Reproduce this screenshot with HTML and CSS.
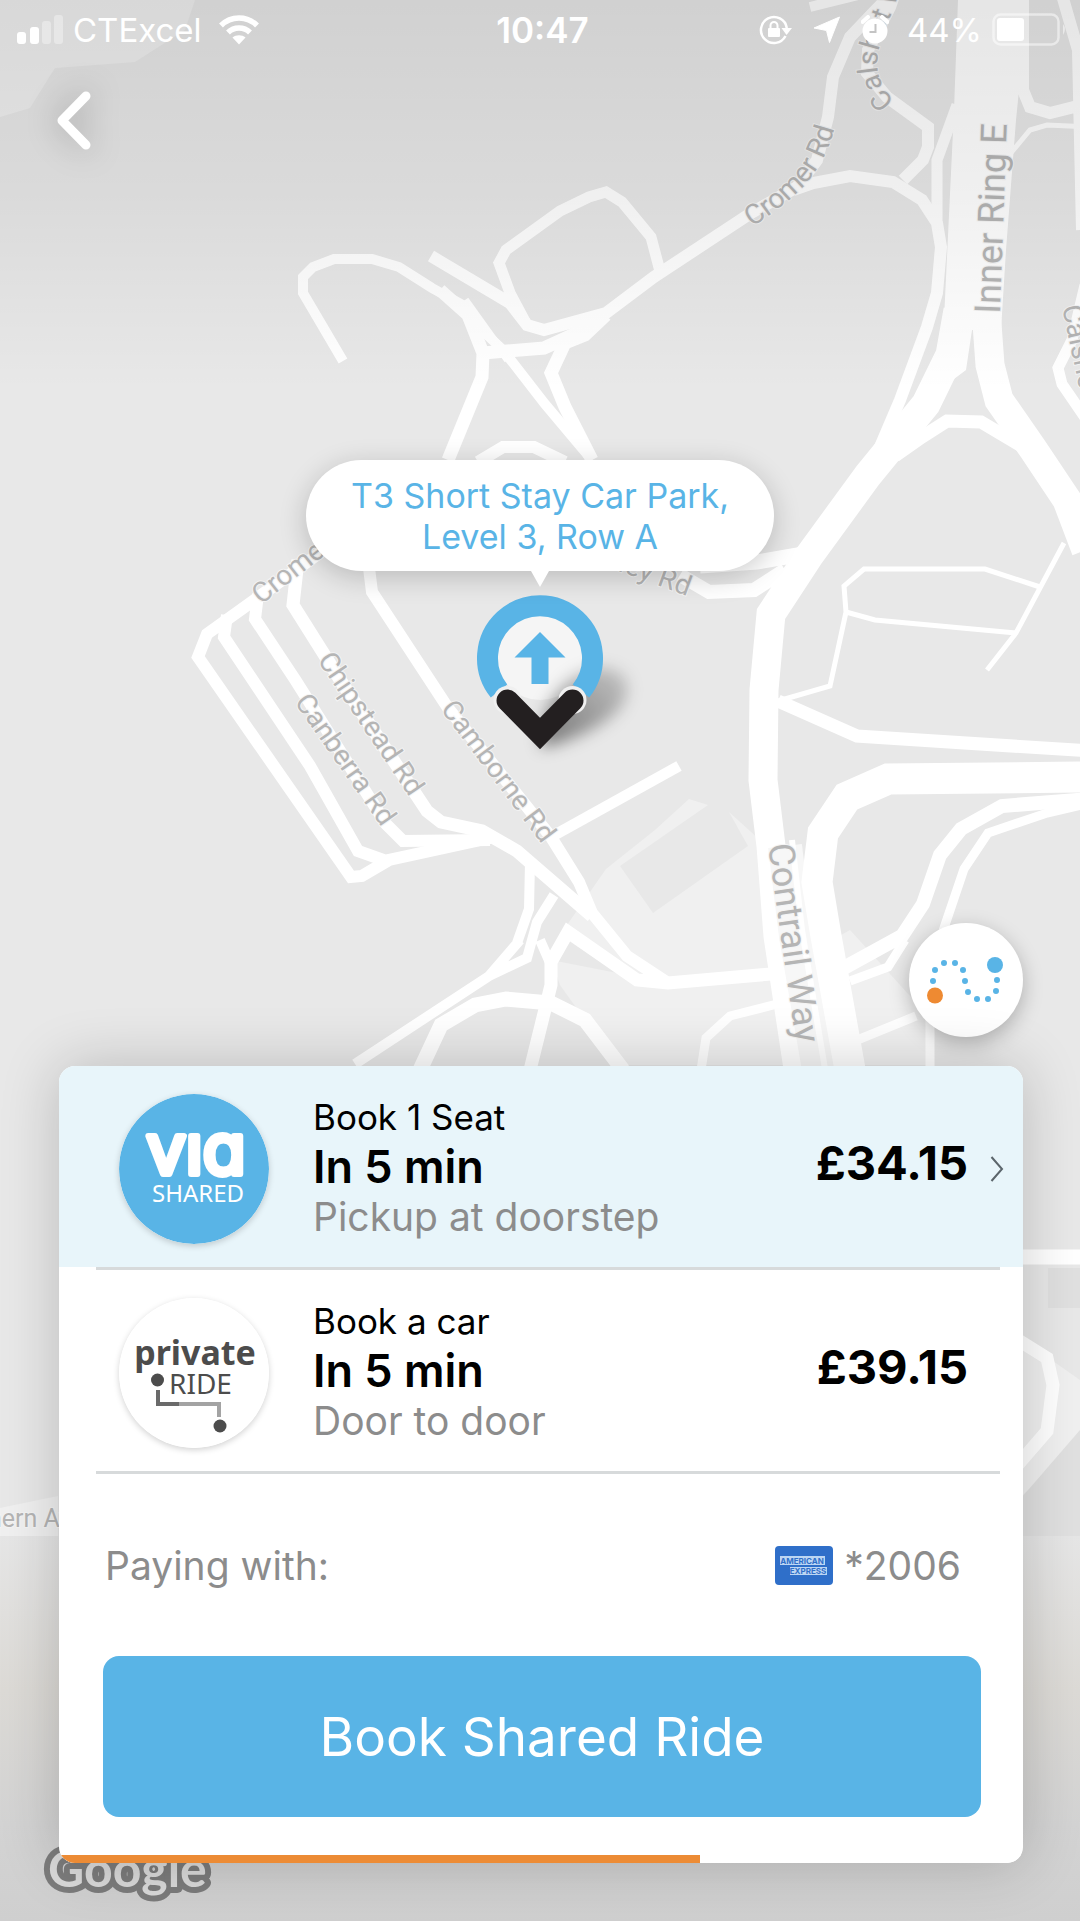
FILE: index.html
```html
<!DOCTYPE html>
<html lang="en">

<head>
    <meta charset="UTF-8">
    <meta name="viewport" content="width=device-width, initial-scale=1.0">
    <title>Book a Ride</title>
    <link rel="stylesheet" href="styles.css">
</head>

<body>
    <div class="screen">

        <svg class="map" viewBox="0 0 1080 1921" preserveAspectRatio="xMidYMid slice" aria-hidden="true">
            <defs>
                <linearGradient id="topShade" x1="0" y1="0" x2="0" y2="1">
                    <stop offset="0" stop-color="#000" stop-opacity="0.1" />
                    <stop offset="0.5" stop-color="#000" stop-opacity="0.06" />
                    <stop offset="1" stop-color="#000" stop-opacity="0" />
                </linearGradient>
                <linearGradient id="bottomShade" x1="0" y1="0" x2="0" y2="1">
                    <stop offset="0" stop-color="#e6e6e6" />
                    <stop offset="0.4" stop-color="#dcdad6" />
                    <stop offset="0.75" stop-color="#d3d3d3" />
                    <stop offset="1" stop-color="#cfcfcf" />
                </linearGradient>
                <path id="cromerPath" d="M752 227 C 802 194 830 168 838 108" />
                <path id="calshotPath" d="M895 101 C 872 80 876 56 882 38 L 904 -20" />
            </defs>

            <!-- Land areas -->
            <path class="land" d="M0 0H195L185 30L135 62L55 68L30 108L0 117Z" />
            <path class="land" d="M560 935L606 869L655 830L689 799L708 805L620 866L653 913L748 846L729 812L771 850V974L668 983L620 975Z" />
            <path class="land" d="M551 960L668 983L771 974L850 930L930 1018V1065H620L585 1020L560 985Z" />
            <path class="land" d="M1023 1340L1080 1380V1440L1023 1495Z" />
            <path class="land" d="M0 1508L58 1496V1536H0Z" />
            <path class="block" d="M1048 1268H1080V1308H1048Z" />
            <path class="block" d="M1023 1496L1080 1430V1536H1023Z" />

            <!-- Main roads -->
            <path class="road-fill" d="M958 0H1028L1016 120L1006 250L1001 330L972 330L966 370L926 400L944 320L954 110Z" />
            <path class="road" stroke-width="29" d="M958 310L950 355L926 404L868 475L809 556L771 614L764 690L763 780L771 846L778 936L799 1075" />
            <path class="road" stroke-width="29" d="M986 310L990 365L999 400L1033 449L1067 500L1086 550" />
            <path class="road-soft" stroke-width="34" d="M785 846L796 936L820 1075" />
            <path class="road" stroke-width="31" d="M1090 777L888 779L847 797L823 833L817 882L826 936L851 1075" />
            <path class="road" stroke-width="6" d="M792 840L802 930L826 1075" />

            <!-- North west -->
            <path class="road" stroke-width="10" d="M343 361L303 293V277L313 267L334 259H372L399 267L432 288L468 308L482 330L503 350L545 404L592 460" />
            <path class="road" stroke-width="12" d="M431 256L510 303L527 325L544 330L606 313L654 277L751 213L797 187L817 160L828 117L833 77L850 37L873 13L895 -10" />
            <path class="road" stroke-width="13" d="M606 315L585 335L565 343L551 373L565 407L592 460" />
            <path class="road" stroke-width="13" d="M440 290L468 315L483 353L482 377L448 460" />
            <path class="road" stroke-width="13" d="M483 353L544 348L590 327" />
            <path class="road" stroke-width="8" d="M465 300L508 360" />
            <path class="road" stroke-width="11" d="M527 325L510 293L499 263L506 250L560 211L589 197L606 192L622 202L651 237L661 275" />
            <path class="road" stroke-width="12" d="M478 462L503 447H534L565 462" />

            <!-- North east -->
            <path class="road" stroke-width="12" d="M793 190L813 183L850 176L893 182L922 200L937 223L941 247L937 293L927 327L900 400L868 475" />
            <path class="road" stroke-width="12" d="M903 180L923 160L928 147V127L887 97L867 73L868 50L890 7L896 -10" />
            <path class="road" stroke-width="11" d="M937 220V160L957 105" />
            <path class="road" stroke-width="12" d="M1023 -5V90L1030 107L1050 113L1090 103M1062 -5L1078 50L1082 230" />
            <path class="road" stroke-width="5" d="M1010 154L1030 130L1047 125L1090 127" />
            <path class="road" stroke-width="11" d="M1085 285L1072 340L1058 368L1062 384L1090 425" />
            <path class="road" stroke-width="10" d="M810 7L858 -5" />
            <path class="road" stroke-width="13" d="M895 456L922 437L947 421L981 422L1023 447" />
            <path class="road" stroke-width="15" d="M815 552L757 562L700 566" />
            <path class="road" stroke-width="14" d="M785 570L754 590L709 592L680 575" />

            <!-- East -->
            <path class="road" stroke-width="13" d="M778 701L857 736L1090 751" />
            <path class="road" stroke-width="5" d="M778 701L830 686L846 612L844 586L864 569H985L1040 587M846 612L875 620L1016 633M1064 543L1016 633L987 670" />
            <path class="road" stroke-width="14" d="M1090 799L1002 806L961 829L940 855L923 904L902 936L840 970" />
            <path class="road" stroke-width="9" d="M1090 803L1047 813L988 833L964 869L943 931M905 940L888 967L850 981" />
            <path class="road" stroke-width="9" d="M850 1043L916 1016M930 1020V1070" />
            <path class="road" stroke-width="15" d="M1020 1257H1090" />
            <path class="road" stroke-width="13" d="M1015 1338L1047 1358L1053 1385L1047 1431L1015 1468" />

            <!-- Car park rows -->
            <path class="road" stroke-width="12" d="M368 560L372 592L448 708L551 837L579 882L592 913L627 956L668 983" />
            <path class="road" stroke-width="11" d="M551 837L679 766" />
            <path class="road" stroke-width="13" d="M298 560L293 605L344 686L427 811L441 822L482 831L517 851L592 916" />
            <path class="road" stroke-width="12" d="M258 594L255 619L296 681L386 824L403 841L490 840" />
            <path class="road" stroke-width="12" d="M227 615L224 637L310 766L358 851L389 862" />
            <path class="road" stroke-width="12" d="M324 550L207 634L198 657L351 877L362 876L389 860L490 838" />

            <!-- South -->
            <path class="road" stroke-width="13" d="M771 974L668 983L637 980L568 932L551 962V985L530 1070" />
            <path class="road" stroke-width="10" d="M530 862L529 909L517 943M554 895L537 922L527 958L489 976L355 1064M520 940L489 976M540 940L551 965" />
            <path class="road" stroke-width="15" d="M420 1070L441 1025L475 1005L506 999L551 1003L585 1020L623 1070" />
            <path class="road" stroke-width="9" d="M701 1070L706 1038L730 1016L785 1002" />

            <!-- Street names -->
            <g class="street">
                <text><textPath href="#cromerPath">Cromer Rd</textPath></text>
                <text><textPath href="#calshotPath">Calshot Wy</textPath></text>
                <text transform="translate(1062 307) rotate(78)">Calshot</text>
                <text transform="translate(261 605) rotate(-38)">Cromer Rd</text>
                <text transform="translate(580 557) rotate(20)">Bailey Rd</text>
                <text transform="translate(317 660) rotate(56)">Chipstead Rd</text>
                <text transform="translate(294 702) rotate(55)">Canberra Rd</text>
                <text transform="translate(440 709) rotate(53)">Camborne Rd</text>
            </g>
            <g class="street street-large">
                <text transform="translate(1000 314) rotate(-88)">Inner Ring E</text>
                <text transform="translate(768 845) rotate(82)">Contrail Way</text>
            </g>

            <rect width="1080" height="390" fill="url(#topShade)" />
            <rect y="1536" width="1080" height="385" fill="url(#bottomShade)" />

            <text class="street street-small" x="-12" y="1527">hern Ave</text>
            <text class="google" x="48" y="1887">Google</text>
        </svg>

        <header class="status-bar">
            <div class="status-left">
                <svg width="47" height="30" viewBox="0 0 47 30" aria-hidden="true">
                    <rect x="0" y="17" width="9" height="12" rx="3" fill="#fff" />
                    <rect x="13" y="12" width="9" height="17" rx="3" fill="#fff" />
                    <rect x="25" y="6" width="9" height="23" rx="3" fill="#fff" opacity="0.35" />
                    <rect x="37" y="0" width="9" height="29" rx="3" fill="#fff" opacity="0.35" />
                </svg>
                <span>CTExcel</span>
                <svg class="wifi" width="40" height="30" viewBox="0 0 40 30" aria-hidden="true">
                    <path d="M2 10.500C12 0.500 28 0.500 38 10.500M9 17.500C15 11.500 25 11.500 31 17.500" fill="none" stroke="#fff" stroke-width="5.500" />
                    <path d="M20 29.500L13.500 22.500C17 19.500 23 19.500 26.500 22.500Z" fill="#fff" />
                </svg>
            </div>
            <time class="clock">10:47</time>
            <div class="status-right">
                <svg width="34" height="30" viewBox="0 0 34 30" aria-hidden="true">
                    <path d="M26.500 21A13 13 0 1 1 27.800 13" fill="none" stroke="#fff" stroke-width="2.500" />
                    <path d="M22.500 13H33L27.500 20Z" fill="#fff" />
                    <rect x="9" y="13" width="12" height="9" rx="1" fill="#fff" />
                    <path d="M11.500 14V10.500A3.500 3.500 0 0 1 18.500 10.500V14" fill="none" stroke="#fff" stroke-width="2" />
                </svg>
                <svg width="28" height="28" viewBox="0 0 28 28" aria-hidden="true">
                    <path d="M26.500 1L16.500 26.500L13.500 14.500L1 12Z" fill="#fff" stroke="#fff" stroke-linejoin="round" />
                </svg>
                <svg width="28" height="30" viewBox="0 0 28 30" aria-hidden="true">
                    <circle cx="14" cy="16" r="12.500" fill="#fff" />
                    <path d="M1.500 7L7 2M26.500 7L21 2" stroke="#fff" stroke-width="4" stroke-linecap="round" />
                    <path d="M14.500 9V17H8.500" fill="none" stroke="#c4c4c4" stroke-width="2" />
                </svg>
                <span>44%</span>
                <svg width="76" height="34" viewBox="0 0 76 34" aria-hidden="true">
                    <rect x="1.500" y="1.500" width="65" height="30" rx="7" fill="none" stroke="#fff" stroke-width="2.500" opacity="0.5" />
                    <path d="M71 11Q75 16 71 22Z" fill="#fff" opacity="0.5" />
                    <rect x="5" y="5" width="27" height="23" rx="3" fill="#fff" />
                </svg>
            </div>
        </header>

        <nav class="top-nav">
            <button type="button" class="back-button" aria-label="Back">
                <svg width="44" height="68" viewBox="0 0 44 68" aria-hidden="true">
                    <path d="M34 10L10 34.500L34 59" fill="none" stroke="#fff" stroke-width="9" stroke-linecap="round" stroke-linejoin="round" />
                </svg>
            </button>
        </nav>

        <main class="map-area">
            <p class="callout">T3 Short Stay Car Park,<br>Level 3, Row A</p>
            <svg class="pin" width="180" height="165" viewBox="0 0 180 165" aria-hidden="true">
                <defs>
                    <filter id="pinBlur" x="-50%" y="-50%" width="200%" height="200%">
                        <feGaussianBlur stdDeviation="8" />
                    </filter>
                    <linearGradient id="pinShadow" x1="0" y1="1" x2="1" y2="0">
                        <stop offset="0" stop-color="#000" stop-opacity="0.5" />
                        <stop offset="1" stop-color="#000" stop-opacity="0.15" />
                    </linearGradient>
                </defs>
                <circle cx="90" cy="67" r="43" fill="#f5f5f5" />
                <path d="M92 158C86 128 108 86 146 78C180 76 184 100 170 118C152 138 122 150 92 158Z" fill="url(#pinShadow)" filter="url(#pinBlur)" />
                <path d="M49 101A52.500 52.500 0 1 1 131 101" fill="none" stroke="#59b4e6" stroke-width="21" />
                <path d="M90 42L115.500 67.500H98.500V94H81.500V67.500H64.500Z" fill="#59b4e6" />
                <circle cx="57.500" cy="110" r="14" fill="#f0f0f0" />
                <circle cx="122.500" cy="110" r="14" fill="#f0f0f0" />
                <path d="M57.500 110.500L90 143.500L122.500 110.500" fill="none" stroke="#231f20" stroke-width="22" stroke-linecap="round" />
            </svg>
            <button type="button" class="route-button" aria-label="Show route">
                <svg width="78" height="48" viewBox="0 0 78 48" aria-hidden="true">
                    <path d="M6 25h0M8 14h0M17 7h0M28 7h0M36 14h0M38 25h0M41 36h0M50 43h0M61 43h0M69 35h0M70 24h0" fill="none" stroke="#59b4e6" stroke-width="6" stroke-linecap="round" />
                    <circle cx="8" cy="39.500" r="8" fill="#ee8a32" />
                    <circle cx="68" cy="9" r="8" fill="#59b4e6" />
                </svg>
            </button>
        </main>

        <section class="booking-card">
            <button type="button" class="ride ride-selected">
                <svg class="ride-logo" width="150" height="150" viewBox="0 0 150 150" aria-hidden="true">
                    <circle cx="75" cy="75" r="75" fill="#59b4e6" />
                    <text class="via-name" x="77" y="80" text-anchor="middle">vıa</text>
                    <text class="via-type" x="79" y="108" text-anchor="middle">SHARED</text>
                </svg>
                <span class="ride-info">
                    <span class="ride-title">Book 1 Seat</span>
                    <span class="ride-time">In 5 min</span>
                    <span class="ride-note">Pickup at doorstep</span>
                </span>
                <span class="ride-price">£34.15</span>
                <svg class="chevron" width="14" height="28" viewBox="0 0 14 28" aria-hidden="true">
                    <path d="M1.500 2L12 14L1.500 26" fill="none" stroke="#5c666c" stroke-width="2" />
                </svg>
            </button>
            <hr class="divider">
            <button type="button" class="ride">
                <svg class="ride-logo" width="150" height="150" viewBox="0 0 150 150" aria-hidden="true">
                    <circle cx="75" cy="75" r="75" fill="#fff" />
                    <text class="private-name" x="76" y="67" text-anchor="middle">private</text>
                    <text class="private-type" x="50" y="96">RIDE</text>
                    <path d="M60 106H100V119" fill="none" stroke="#a3a3a3" stroke-width="4" />
                    <path d="M39 92V106H60" fill="none" stroke="#6a6a6a" stroke-width="4" />
                    <circle cx="38.500" cy="82" r="6.500" fill="#4c4c4c" />
                    <circle cx="101" cy="128" r="6.500" fill="#4c4c4c" />
                </svg>
                <span class="ride-info">
                    <span class="ride-title">Book a car</span>
                    <span class="ride-time">In 5 min</span>
                    <span class="ride-note">Door to door</span>
                </span>
                <span class="ride-price">£39.15</span>
            </button>
            <hr class="divider">

            <div class="payment">
                <span>Paying with:</span>
                <span class="payment-card">
                    <svg width="58" height="39" viewBox="0 0 58 39" role="img" aria-label="American Express">
                        <rect width="58" height="39" rx="4" fill="#2f6fc9" />
                        <rect x="5" y="10" width="45" height="9" fill="#bcd6f3" />
                        <rect x="15" y="21" width="37" height="8" fill="#bcd6f3" />
                        <text class="amex" x="27" y="18" text-anchor="middle">AMERICAN</text>
                        <text class="amex" x="33" y="28" text-anchor="middle">EXPRESS</text>
                    </svg>
                    *2006
                </span>
            </div>

            <button type="button" class="book-button">Book Shared Ride</button>
            <progress class="offer-timer" value="66.5" max="100" aria-label="Time left to book"></progress>
        </section>
    </div>
</body>

</html>
```
FILE: styles.css
```css
body {
    margin: 0;
    background-color: #e8e8e8;
    font-family: Inter, "Liberation Sans", Arial, sans-serif;
}

button {
    padding: 0;
    border: none;
    background: none;
    font-family: inherit;
    color: inherit;
    cursor: pointer;
}

svg {
    display: block;
}

.screen {
    position: relative;
    display: flex;
    flex-direction: column;
    min-height: 100vh;
    overflow: hidden;
}

/* Map background, everything else sits over it */
.map {
    position: absolute;
    top: 0;
    left: 0;
    width: 100%;
    height: 100%;
    background-color: #e8e8e8;
}

.status-bar,
.top-nav,
.map-area,
.booking-card {
    position: relative;
}

.land {
    fill: #f0f0f0;
}

.block {
    fill: #e0e0e0;
}

.road-fill {
    fill: #fff;
}

.road {
    fill: none;
    stroke: #fff;
}

.road-soft {
    fill: none;
    stroke: #f7f7f7;
}

.street {
    font-family: Roboto, sans-serif;
    font-size: 28px;
    fill: #b5b5b5;
    stroke: #f4f4f4;
    stroke-width: 2px;
    paint-order: stroke;
}

.street-large {
    font-size: 36px;
}

.street-small {
    font-size: 25px;
}

.google {
    font-family: Lato, sans-serif;
    font-size: 50px;
    font-weight: bold;
    fill: #dadada;
    stroke: #7c7c7c;
    stroke-width: 12px;
    stroke-linejoin: round;
    paint-order: stroke;
}

/* Status bar */
.status-bar {
    display: grid;
    grid-template-columns: 1fr auto 1fr;
    align-items: center;
    height: 60px;
    padding: 0 12px 0 17px;
    color: #fff;
    font-size: 33px;
}

.status-left,
.status-right {
    display: flex;
    align-items: center;
    gap: 9px;
}

.status-right {
    justify-content: flex-end;
    gap: 20px;
}

.status-right span {
    margin: 0 -10px 0 -2px;
}

.wifi {
    margin-left: 8px;
}

.clock {
    font-size: 35px;
    font-weight: 600;
}

.top-nav {
    padding: 26px 0 0 52px;
}

.back-button svg {
    filter: drop-shadow(0 0 16px rgba(0, 0, 0, 0.3));
}

/* Pickup point */
.map-area {
    flex: 1;
    display: flex;
    flex-direction: column;
    align-items: center;
    padding: 302px 57px 29px;
}

.callout {
    position: relative;
    margin: 0;
    padding: 15px 45px 14px;
    border-radius: 56px;
    background-color: #fff;
    box-shadow: 0 6px 28px rgba(0, 0, 0, 0.2);
    color: #59b4e6;
    font-size: 34px;
    line-height: 41px;
    text-align: center;
}

.callout::after {
    content: "";
    position: absolute;
    top: 100%;
    left: 50%;
    margin-left: -9px;
    border: 9px solid transparent;
    border-top: 16px solid #fff;
    border-bottom: none;
}

.pin {
    margin-top: 19px;
    overflow: visible;
}

.route-button {
    display: flex;
    align-items: center;
    justify-content: center;
    align-self: flex-end;
    width: 114px;
    height: 114px;
    margin-top: auto;
    border-radius: 50%;
    background-color: #fff;
    box-shadow: 0 6px 20px rgba(0, 0, 0, 0.25);
}

/* Booking card */
.booking-card {
    display: flex;
    flex-direction: column;
    margin: 0 57px 58px 59px;
    border-radius: 16px;
    overflow: hidden;
    background-color: #fff;
    box-shadow: 0 0 60px rgba(0, 0, 0, 0.2);
}

.ride {
    display: flex;
    align-items: center;
    height: 201px;
    padding: 0 19px 0 60px;
    text-align: left;
}

.ride-selected {
    background-color: #e8f5fa;
}

.ride-logo {
    margin: 4px 44px 0 0;
    border-radius: 50%;
    box-shadow: 0 2px 6px rgba(0, 0, 0, 0.18);
}

.ride-info {
    flex: 1;
    display: flex;
    flex-direction: column;
    line-height: 50px;
}

.ride-title {
    font-size: 35px;
    color: #000;
}

.ride-time {
    font-size: 45px;
    font-weight: 600;
    color: #000;
}

.ride-note {
    font-size: 39px;
    color: #8c8c8c;
}

.ride-price {
    margin-bottom: 8px;
    font-size: 47px;
    font-weight: bold;
    color: #000;
}

.ride-price:last-child {
    margin-right: 36px;
}

.chevron {
    margin: 4px 0 0 22px;
}

.divider {
    width: auto;
    height: 3px;
    margin: 0 23px 0 37px;
    border: none;
    background-color: #d7dadb;
}

/* Logo lettering */
.via-name {
    font-size: 70px;
    font-weight: 400;
    font-feature-settings: "cv11";
    fill: #fff;
    stroke: #fff;
    stroke-width: 6px;
    stroke-linejoin: round;
}

.via-type,
.private-name,
.private-type {
    font-family: "Noto Sans", sans-serif;
}

.via-type {
    font-size: 24px;
    fill: #fff;
}

.private-name {
    font-size: 34px;
    font-weight: bold;
    fill: #4c4c4c;
}

.private-type {
    font-size: 28px;
    fill: #4c4c4c;
}

.amex {
    font-size: 8px;
    font-weight: bold;
    fill: #2f6fc9;
}

.payment {
    display: flex;
    align-items: center;
    justify-content: space-between;
    height: 182px;
    padding: 0 62px 0 46px;
    color: #8c8c8c;
    font-size: 39px;
}

.payment-card {
    display: flex;
    align-items: center;
    gap: 11px;
}

.book-button {
    height: 161px;
    margin: 0 42px 38px 44px;
    border-radius: 16px;
    background-color: #59b4e6;
    color: #fff;
    font-size: 53px;
}

.offer-timer {
    appearance: none;
    width: 100%;
    height: 8px;
    border: none;
    background-color: #fff;
}

.offer-timer::-webkit-progress-bar {
    background-color: #fff;
}

.offer-timer::-webkit-progress-value {
    background-color: #ec8b35;
}

.offer-timer::-moz-progress-bar {
    background-color: #ec8b35;
}
```
